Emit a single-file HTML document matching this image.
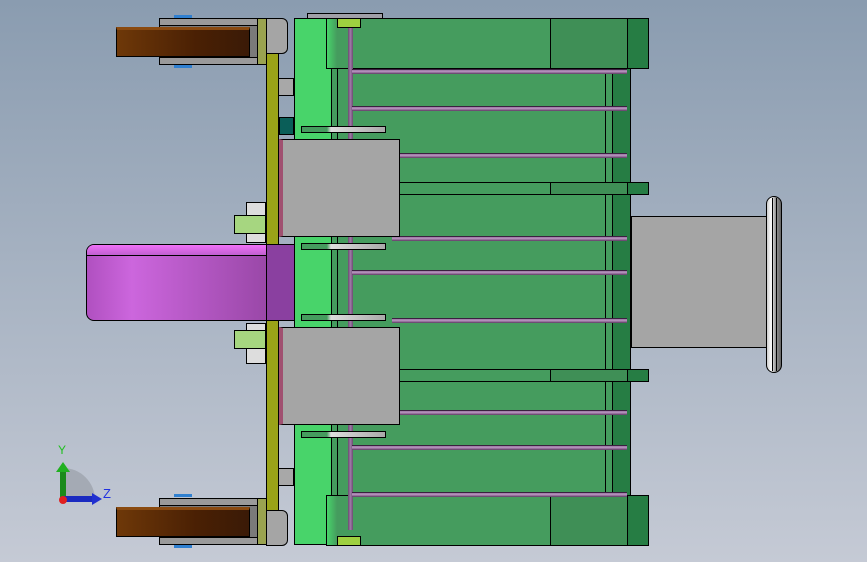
<!DOCTYPE html>
<html><head><style>
body{margin:0;width:867px;height:562px;overflow:hidden;background:linear-gradient(#8a9cb0,#c5cad5);position:relative;font-family:"Liberation Sans",sans-serif}
div{position:absolute;box-sizing:border-box}
.k{border:1.3px solid #000}
.rod{height:5px;background:linear-gradient(#9a78a2,#b893c0 40%,#5a3a60);border-top:1px solid #3a2040}
</style></head><body>
<div class="k" style="left:294px;top:18px;width:337px;height:527px;background:#459c5e"></div>
<div class="k" style="left:294px;top:18px;width:38px;height:527px;background:#48d46a"></div>
<div class="k" style="left:331px;top:18px;width:7px;height:527px;background:#459c5e"></div>
<div class="k" style="left:605px;top:18px;width:26px;height:527px;background:#267d44"></div>
<div class="k" style="left:605px;top:18px;width:8px;height:527px;background:#459c5e"></div>
<div class="k" style="left:326px;top:18px;width:323px;height:51px;background:#459c5e"></div>
<div style="left:327px;top:19px;width:10px;height:49px;background:linear-gradient(90deg,#48d46a,#459c5e)"></div>
<div class="k" style="left:550px;top:18px;width:78px;height:51px;background:#3f8f56"></div>
<div class="k" style="left:627px;top:18px;width:22px;height:51px;background:#267d44"></div>
<div class="k" style="left:326px;top:495px;width:323px;height:51px;background:#459c5e"></div>
<div style="left:327px;top:496px;width:10px;height:49px;background:linear-gradient(90deg,#48d46a,#459c5e)"></div>
<div class="k" style="left:550px;top:495px;width:78px;height:51px;background:#3f8f56"></div>
<div class="k" style="left:627px;top:495px;width:22px;height:51px;background:#267d44"></div>
<div class="k" style="left:398px;top:182px;width:251px;height:13px;background:#459c5e"></div>
<div class="k" style="left:550px;top:182px;width:78px;height:13px;background:#3f8f56"></div>
<div class="k" style="left:627px;top:182px;width:22px;height:13px;background:#267d44"></div>
<div class="k" style="left:398px;top:369px;width:251px;height:13px;background:#459c5e"></div>
<div class="k" style="left:550px;top:369px;width:78px;height:13px;background:#3f8f56"></div>
<div class="k" style="left:627px;top:369px;width:22px;height:13px;background:#267d44"></div>
<div style="left:348px;top:20px;width:5px;height:510px;background:linear-gradient(90deg,#6a4a70,#a07aa8,#6a4a70)"></div>
<div class="rod" style="left:352px;top:69px;width:275px"></div>
<div class="rod" style="left:352px;top:106px;width:275px"></div>
<div class="rod" style="left:392px;top:153px;width:235px"></div>
<div class="rod" style="left:392px;top:236px;width:235px"></div>
<div class="rod" style="left:352px;top:270px;width:275px"></div>
<div class="rod" style="left:392px;top:318px;width:235px"></div>
<div class="rod" style="left:392px;top:410px;width:235px"></div>
<div class="rod" style="left:352px;top:445px;width:275px"></div>
<div class="rod" style="left:352px;top:492px;width:275px"></div>
<div class="k" style="left:307px;top:13px;width:76px;height:6px;background:#a0a0a8"></div>
<div class="k" style="left:337px;top:18px;width:24px;height:10px;background:#9ed040"></div>
<div class="k" style="left:337px;top:536px;width:24px;height:10px;background:#9ed040"></div>
<div class="k" style="left:266px;top:53px;width:13px;height:492px;background:#9aa318"></div>
<div class="k" style="left:278px;top:78px;width:16px;height:18px;background:#a8a8a8"></div>
<div class="k" style="left:279px;top:117px;width:15px;height:18px;background:#0a5e58"></div>
<div class="k" style="left:278px;top:468px;width:16px;height:18px;background:#a8a8a8"></div>
<div class="k" style="left:279px;top:139px;width:121px;height:98px;background:#a5a5a5;border-left:4px solid #a05070"></div>
<div class="k" style="left:279px;top:327px;width:121px;height:98px;background:#a5a5a5;border-left:4px solid #a05070"></div>
<div class="k" style="left:301px;top:126px;width:85px;height:7px;background:linear-gradient(90deg,#459c5e 30%,#ddd 35%,#aaa)"></div>
<div class="k" style="left:301px;top:243px;width:85px;height:7px;background:linear-gradient(90deg,#459c5e 30%,#ddd 35%,#aaa)"></div>
<div class="k" style="left:301px;top:314px;width:85px;height:7px;background:linear-gradient(90deg,#459c5e 30%,#ddd 35%,#aaa)"></div>
<div class="k" style="left:301px;top:431px;width:85px;height:7px;background:linear-gradient(90deg,#459c5e 30%,#ddd 35%,#aaa)"></div>
<div class="k" style="left:86px;top:244px;width:181px;height:77px;background:linear-gradient(90deg,#b050c0,#cc66dd 25%,#9a48a8);border-radius:8px 0 0 8px"></div>
<div style="left:87px;top:245px;width:179px;height:11px;background:linear-gradient(#f070f8,#c060d0);border-bottom:1px solid #000;border-radius:7px 0 0 0"></div>
<div class="k" style="left:266px;top:244px;width:29px;height:77px;background:#8a40a0"></div>
<div class="k" style="left:246px;top:202px;width:20px;height:41px;background:#ddd"></div>
<div class="k" style="left:234px;top:215px;width:32px;height:19px;background:#a6d680"></div>
<div class="k" style="left:246px;top:323px;width:20px;height:41px;background:#ddd"></div>
<div class="k" style="left:234px;top:330px;width:32px;height:19px;background:#a6d680"></div>
<div class="k" style="left:159px;top:18px;width:99px;height:47px;background:#7a7a7a"></div>
<div class="k" style="left:159px;top:18px;width:99px;height:8px;background:#9a9a9a"></div>
<div class="k" style="left:159px;top:57px;width:99px;height:8px;background:#9a9a9a"></div>
<div style="left:174px;top:15px;width:18px;height:3px;background:#3080d0"></div>
<div style="left:174px;top:65px;width:18px;height:3px;background:#3080d0"></div>
<div class="k" style="left:116px;top:27px;width:134px;height:30px;background:linear-gradient(90deg,#6e3808,#4a2004 60%,#3a1a06);border-top:3px solid #8a4a10"></div>
<div class="k" style="left:257px;top:18px;width:10px;height:47px;background:#9aa350"></div>
<div class="k" style="left:266px;top:18px;width:22px;height:36px;background:#a5a5a5;border-radius:0 6px 6px 0"></div>
<div class="k" style="left:159px;top:498px;width:99px;height:47px;background:#7a7a7a"></div>
<div class="k" style="left:159px;top:498px;width:99px;height:8px;background:#9a9a9a"></div>
<div class="k" style="left:159px;top:537px;width:99px;height:8px;background:#9a9a9a"></div>
<div style="left:174px;top:494px;width:18px;height:3px;background:#3080d0"></div>
<div style="left:174px;top:545px;width:18px;height:3px;background:#3080d0"></div>
<div class="k" style="left:116px;top:507px;width:134px;height:30px;background:linear-gradient(90deg,#6e3808,#4a2004 60%,#3a1a06);border-top:3px solid #8a4a10"></div>
<div class="k" style="left:257px;top:498px;width:10px;height:47px;background:#9aa350"></div>
<div class="k" style="left:266px;top:510px;width:22px;height:36px;background:#a5a5a5;border-radius:0 6px 6px 0"></div>
<div class="k" style="left:631px;top:216px;width:136px;height:132px;background:#a5a5a5"></div>
<div class="k" style="left:766px;top:196px;width:16px;height:177px;background:linear-gradient(90deg,#ccc,#fff 30%,#999 60%,#666);border-radius:8px"></div>
<div style="left:772px;top:198px;width:1px;height:173px;background:#000"></div>
<div style="left:776px;top:198px;width:1px;height:173px;background:#000"></div>
<svg style="position:absolute;left:50px;top:440px" width="70" height="70">
<path d="M13 28 A32 32 0 0 1 45 60 L13 60Z" fill="#9aa0a8" opacity=".7"/>
<rect x="10" y="30" width="6" height="30" fill="#1a8a1a"/><path d="M6 32 L13 22 L20 32Z" fill="#20b020"/>
<rect x="13" y="56" width="30" height="6" fill="#1a2ac0"/><path d="M42 53 L52 59 L42 65Z" fill="#2030d0"/>
<circle cx="13" cy="60" r="4" fill="#e02020"/>
<text x="8" y="14" font-size="12" fill="#20c020" font-family="Liberation Sans">Y</text>
<text x="53" y="58" font-size="13" fill="#2030e0" font-family="Liberation Sans">Z</text>
</svg>
</body></html>
